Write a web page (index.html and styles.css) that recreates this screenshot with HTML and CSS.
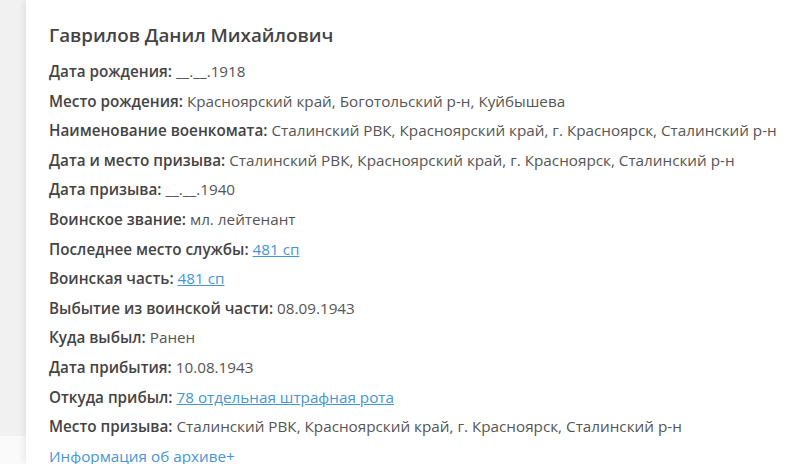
FILE: index.html
```html
<!DOCTYPE html>
<html lang="ru">
<head>
<meta charset="utf-8">
<link rel="stylesheet" href="styles.css">
</head>
<body>
<div class="page">
  <div class="side"></div>
  <div class="card">
    <h1 class="name">Гаврилов Данил Михайлович</h1>
    <div class="row"><b>Дата рождения:</b> __.__.1918</div>
    <div class="row"><b>Место рождения:</b> Красноярский край, Боготольский р-н, Куйбышева</div>
    <div class="row"><b>Наименование военкомата:</b> Сталинский РВК, Красноярский край, г. Красноярск, Сталинский р-н</div>
    <div class="row"><b>Дата и место призыва:</b> Сталинский РВК, Красноярский край, г. Красноярск, Сталинский р-н</div>
    <div class="row"><b>Дата призыва:</b> __.__.1940</div>
    <div class="row"><b>Воинское звание:</b> мл. лейтенант</div>
    <div class="row"><b>Последнее место службы:</b> <a href="#">481 сп</a></div>
    <div class="row"><b>Воинская часть:</b> <a href="#">481 сп</a></div>
    <div class="row"><b>Выбытие из воинской части:</b> 08.09.1943</div>
    <div class="row"><b>Куда выбыл:</b> Ранен</div>
    <div class="row"><b>Дата прибытия:</b> 10.08.1943</div>
    <div class="row"><b>Откуда прибыл:</b> <a href="#">78 отдельная штрафная рота</a></div>
    <div class="row"><b>Место призыва:</b> Сталинский РВК, Красноярский край, г. Красноярск, Сталинский р-н</div>
    <div class="row"><span class="more">Информация об архиве+</span></div>
  </div>
</div>
</body>
</html>
```

FILE: styles.css
```css
html, body {
  margin: 0;
  padding: 0;
}
body {
  background: #fafafa;
  font-family: "Open Sans", "Noto Sans", sans-serif;
  color: #555;
  overflow: hidden;
  height: 464px;
}
.page {
  display: flex;
  align-items: flex-start;
  height: 464px;
}
.side {
  width: 26px;
  height: 436px;
  background: #f1f1f1;
  flex: none;
}
.card {
  flex: 1;
  background: #fff;
  height: 464px;
  box-sizing: border-box;
  padding: 20px 0 0 23px;
  box-shadow: -3px 0 6px rgba(0,0,0,0.06);
  position: relative;
}
.name {
  margin: 0 0 7px;
  font-size: 18.8px;
  line-height: 30px;
  font-weight: 600;
  color: #444;
}
.row {
  font-size: 15.25px;
  line-height: 29.6px;
  white-space: nowrap;
}
.row b {
  color: #444;
  font-weight: 600;
}
.row a {
  color: #4796d4;
  text-decoration: underline;
}
.more {
  color: #4796d4;
}
```
